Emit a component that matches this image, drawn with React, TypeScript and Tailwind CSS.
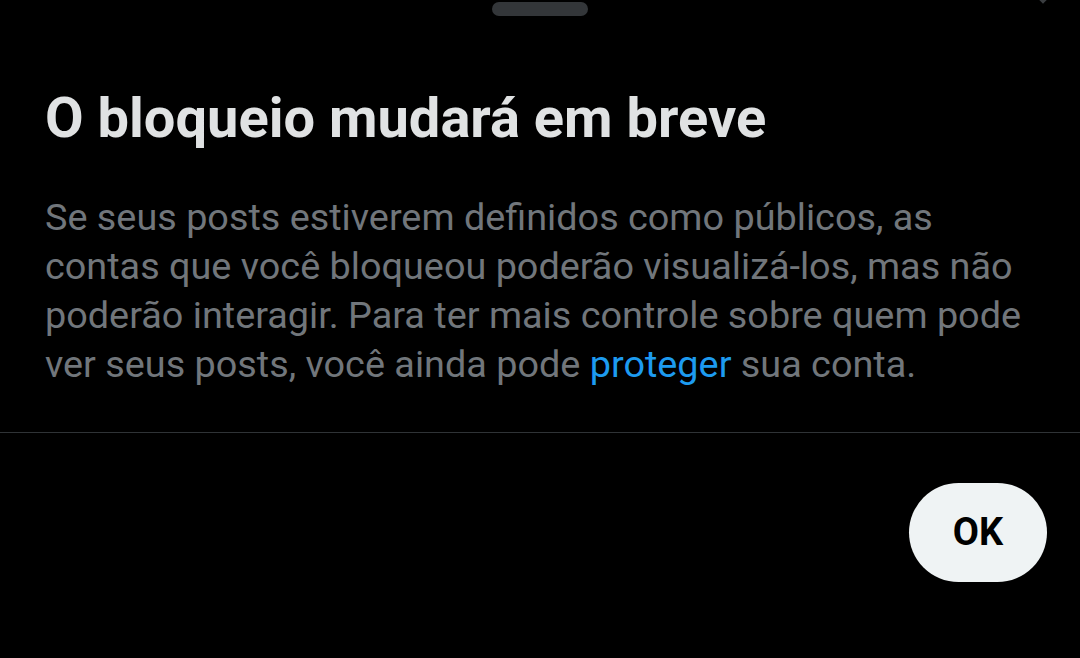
import React from "react";

export default function App() {
  return (
    <div
      className="relative w-[1080px] h-[658px] bg-black overflow-hidden"
      style={{ fontFamily: "Roboto, 'Noto Sans', sans-serif" }}
    >
      <div className="absolute right-[33px] top-[-6px] w-[8px] h-[8px] rotate-45 bg-[#3a3d40]" />
      <div className="flex justify-center pt-[2px]">
        <div className="w-[96px] h-[14px] rounded-full bg-[#333639]" />
      </div>
      <div className="px-[45px] pt-[69px]">
        <h1 className="text-[56px] leading-[66px] font-bold text-[#e0e2e3] whitespace-nowrap">
          O bloqueio mudará em breve
        </h1>
        <p className="mt-[42px] text-[37.8px] leading-[49px] text-[#71767b] whitespace-nowrap">
          Se seus posts estiverem definidos como públicos, as
          <br />
          contas que você bloqueou poderão visualizá-los, mas não
          <br />
          poderão interagir. Para ter mais controle sobre quem pode
          <br />
          ver seus posts, você ainda pode{" "}
          <span className="text-[#1d9bf0]">proteger</span> sua conta.
        </p>
      </div>
      <div className="mt-[43px] h-px bg-[#2f3336]" />
      <div className="flex justify-end pr-[33px] pt-[50px]">
        <button className="w-[138px] h-[99px] rounded-full bg-[#eff3f4] text-black font-bold text-[38px]">
          OK
        </button>
      </div>
    </div>
  );
}
